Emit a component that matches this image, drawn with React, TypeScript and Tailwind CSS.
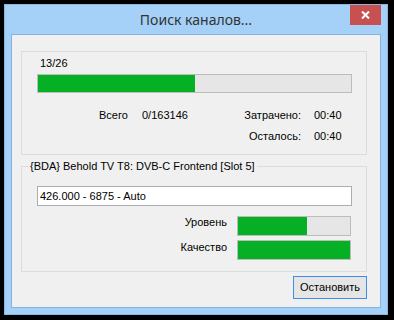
import React from "react";

function Bar({ pct, w, h }: { pct: number; w: string; h: string }) {
  return (
    <div className={`${w} ${h} border border-[#bcbcbc] bg-[#e6e6e6] flex`}>
      <div className="h-full bg-[#06b025]" style={{ width: `${pct}%` }} />
    </div>
  );
}

export default function App() {
  return (
    <div className="w-[394px] h-[320px] bg-black pl-[4px] pt-[4px] font-['Liberation_Sans',Arial,sans-serif] text-[11px] leading-[13px] text-black">
      <div className="w-[384px] h-[311px] border border-[#89b6e1] bg-[#a5d1f9] flex flex-col">
        <div className="relative h-[29px] flex items-center justify-center">
          <span className="font-['Noto_Sans',sans-serif] text-[14px] leading-[20px] text-[#333] pt-[1px]">
            Поиск каналов...
          </span>
          <div className="absolute top-0 right-[6px] w-[31px] h-[20px] bg-[#c75050] flex items-center justify-center">
            <svg width="9" height="8" viewBox="0 0 9 8">
              <path d="M1 0.5 L8 7.5 M8 0.5 L1 7.5" stroke="white" strokeWidth="2" />
            </svg>
          </div>
        </div>
        <div className="mx-[6px] h-[274px] border border-[#86b3df] bg-[#f0f0f0] flex flex-col">
          {/* group 1 */}
          <div className="mt-[16px] ml-[9px] w-[346px] h-[104px] border border-[#dcdcdc] flex flex-col">
            <div className="pt-[5px] pl-[18px]">13/26</div>
            <div className="mt-[4px] ml-[15px]">
              <Bar pct={50} w="w-[315px]" h="h-[19px]" />
            </div>
            <div className="mt-[16px] flex">
              <span className="ml-[77px] w-[43px]">Всего</span>
              <span className="w-[66px]">0/163146</span>
              <span className="w-[93px] text-right">Затрачено:</span>
              <span className="ml-[13px]">00:40</span>
            </div>
            <div className="mt-[8px] flex">
              <span className="ml-[186px] w-[93px] text-right">Осталось:</span>
              <span className="ml-[13px]">00:40</span>
            </div>
          </div>
          {/* group 2 */}
          <fieldset className="mt-[5px] ml-[9px] w-[346px] border border-[#dcdcdc] pb-[11px] flex flex-col">
            <legend className="ml-[6px] px-[2px] leading-[13px]">
              {"{BDA} Behold TV T8: DVB-C Frontend [Slot 5]"}
            </legend>
            <div className="mt-[13px] ml-[15px] w-[315px] h-[20px] border border-[#abadb3] bg-white pl-[2px] flex items-center">
              426.000 - 6875 - Auto
            </div>
            <div className="mt-[10px] flex items-start">
              <span className="w-[205px] text-right pt-[0px]">Уровень</span>
              <div className="ml-[10px]">
                <Bar pct={62} w="w-[114px]" h="h-[20px]" />
              </div>
            </div>
            <div className="mt-[4px] flex items-start">
              <span className="w-[205px] text-right pt-[1px]">Качество</span>
              <div className="ml-[10px]">
                <Bar pct={100} w="w-[114px]" h="h-[20px]" />
              </div>
            </div>
          </fieldset>
          <div className="mt-[4px] ml-[281px]">
            <button className="w-[74px] h-[23px] border border-[#3d8ee6] bg-[#e5e5e5] flex items-center justify-center leading-[13px]">
              Остановить
            </button>
          </div>
        </div>
      </div>
    </div>
  );
}
